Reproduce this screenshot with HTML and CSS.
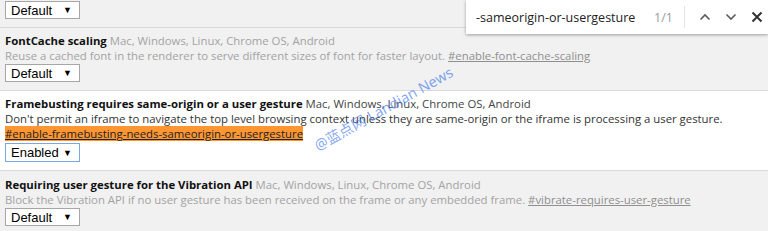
FILE: index.html
```html
<!DOCTYPE html>
<html>
<head>
<meta charset="utf-8">
<link rel="stylesheet" href="styles.css">
</head>
<body>
<div class="page">
  <div class="list">
    <div class="entry dim first">
      <div class="line"><span class="name">Experimental canvas features</span> <span class="plat">Mac, Windows, Linux, Chrome OS, Android</span></div>
      <div class="line desc">Enables the use of experimental canvas features which are still in development and may change or go away.</div>
      <div class="sel"><span class="val">Default</span><span class="arr">▼</span></div>
    </div>
    <div class="entry dim">
      <div class="line"><span class="name">FontCache scaling</span> <span class="plat">Mac, Windows, Linux, Chrome OS, Android</span></div>
      <div class="line desc">Reuse a cached font in the renderer to serve different sizes of font for faster layout. <span class="link">#enable-font-cache-scaling</span></div>
      <div class="sel"><span class="val">Default</span><span class="arr">▼</span></div>
    </div>
    <div class="entry active">
      <div class="line"><span class="name">Framebusting requires same-origin or a user gesture</span> <span class="plat">Mac, Windows, Linux, Chrome OS, Android</span></div>
      <div class="line desc">Don't permit an iframe to navigate the top level browsing context unless they are same-origin or the iframe is processing a user gesture.</div>
      <div class="line"><span class="hit">#enable-framebusting-needs-sameorigin-or-usergesture</span></div>
      <div class="sel focus"><span class="val">Enabled</span><span class="arr">▼</span></div>
    </div>
    <div class="entry dim">
      <div class="line"><span class="name">Requiring user gesture for the Vibration API</span> <span class="plat">Mac, Windows, Linux, Chrome OS, Android</span></div>
      <div class="line desc">Block the Vibration API if no user gesture has been received on the frame or any embedded frame. <span class="link">#vibrate-requires-user-gesture</span></div>
      <div class="sel"><span class="val">Default</span><span class="arr">▼</span></div>
    </div>
  </div>

  <div class="findbar">
    <span class="query">-sameorigin-or-usergesture</span>
    <span class="count">1/1</span>
    <span class="divider"></span>
    <svg class="btn" width="12" height="8" viewBox="0 0 12 8"><path d="M1.5 6.5 L6 2 L10.5 6.5" fill="none" stroke="#5a5a5a" stroke-width="1.6"/></svg>
    <svg class="btn" width="12" height="8" viewBox="0 0 12 8"><path d="M1.5 1.5 L6 6 L10.5 1.5" fill="none" stroke="#5a5a5a" stroke-width="1.6"/></svg>
    <svg class="btn close" width="12" height="12" viewBox="0 0 12 12"><path d="M1.5 1.5 L10.5 10.5 M10.5 1.5 L1.5 10.5" fill="none" stroke="#333" stroke-width="2"/></svg>
  </div>

  <div class="watermark">@蓝点网 Landian News</div>
</div>
</body>
</html>
```
FILE: styles.css
```css
html, body {
  margin: 0;
  padding: 0;
}
body {
  width: 768px;
  height: 231px;
  overflow: hidden;
  background: #f1f1f1;
  font-family: "Open Sans", "Noto Sans", sans-serif;
  font-size: 11.35px;
  color: #000;
}
.page {
  position: relative;
  width: 768px;
  height: 231px;
  overflow: hidden;
}
.list {
  display: flex;
  flex-direction: column;
}
.entry {
  border-top: 1px solid #d9d9d9;
  padding: 5px 5px 8px;
  display: flex;
  flex-direction: column;
  align-items: flex-start;
}
.entry.first {
  border-top: none;
  margin-top: -35px;
}
.entry.dim {
  background: #f1f1f1;
}
.entry.active {
  background: #ffffff;
}
.active + .entry {
  padding-top: 6px;
}
.line {
  line-height: 15px;
  white-space: nowrap;
}
.name {
  font-weight: 700;
  color: #111;
}
.dim .plat,
.dim .desc {
  color: #a3a3a3;
}
.active .plat {
  color: #444;
}
.active .desc {
  color: #333;
}
.link {
  text-decoration: underline;
  color: #8f8f8f;
}
.hit {
  background: #ff9632;
  color: #222;
  text-decoration: underline;
}
.sel {
  margin-top: 1px;
  width: 73px;
  height: 16px;
  border: 1px solid #a6a6a6;
  background: #fff;
  display: flex;
  align-items: center;
  justify-content: space-between;
  font-family: "Liberation Sans", Arial, sans-serif;
  font-size: 13px;
  color: #000;
}
.sel.focus {
  margin-top: 2px;
  height: 17px;
  border-color: #7aa6e6;
}
.val {
  padding-left: 5px;
}
.arr {
  font-size: 9px;
  padding-right: 7px;
}
.findbar {
  position: absolute;
  top: 0;
  left: 466px;
  width: 302px;
  height: 34px;
  background: #fff;
  box-shadow: 0 1px 3px rgba(0,0,0,0.35);
  display: flex;
  align-items: center;
  box-sizing: border-box;
  padding-left: 10px;
  font-family: "Open Sans", "Noto Sans", sans-serif;
  font-size: 12.5px;
}
.query {
  color: #222;
  width: 178px;
}
.count {
  color: #9a9a9a;
  width: 30px;
}
.divider {
  width: 1px;
  height: 22px;
  background: #e4e4e4;
  margin-right: 14px;
}
.btn {
  margin-right: 14px;
}
.close {
  margin-right: 0;
}
.watermark {
  position: absolute;
  left: 319px;
  top: 137px;
  transform: rotate(-29deg);
  transform-origin: left bottom;
  font-family: "Noto Sans", "Noto Sans CJK SC", sans-serif;
  font-size: 14.5px;
  color: rgba(80, 130, 235, 0.7);
  white-space: nowrap;
  line-height: 16px;
}
```
